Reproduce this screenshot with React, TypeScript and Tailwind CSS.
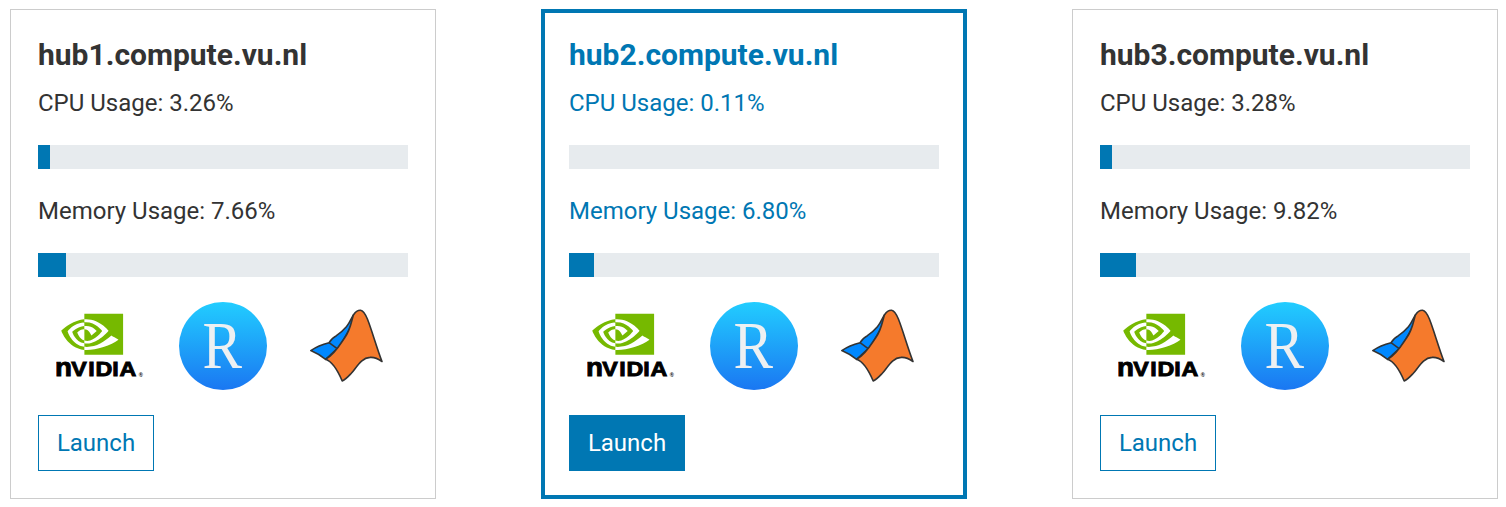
import React from "react";

type Hub = { name: string; cpu: string; memory: string; active?: boolean };

const hubs: Hub[] = [
  { name: "hub1.compute.vu.nl", cpu: "3.26", memory: "7.66" },
  { name: "hub2.compute.vu.nl", cpu: "0.11", memory: "6.80", active: true },
  { name: "hub3.compute.vu.nl", cpu: "3.28", memory: "9.82" },
];

function NvidiaLogo() {
  return (
    <svg viewBox="0 0 88 88" className="size-[88px]" role="img" aria-label="NVIDIA">
      <g transform="translate(5.3 1.4) scale(2.575)">
        <path
          fill="#76b900"
          d="M8.948 8.798v-1.43a6.7 6.7 0 0 1 .424-.018c3.922-.124 6.493 3.374 6.493 3.374s-2.774 3.851-5.75 3.851c-.398 0-.787-.062-1.158-.185v-4.346c1.528.185 1.837.857 2.747 2.385l2.04-1.714s-1.492-1.952-4-1.952a6.016 6.016 0 0 0-.796.035m0-4.735v2.138l.424-.027c5.45-.185 9.01 4.47 9.01 4.47s-4.08 4.964-8.33 4.964c-.37 0-.733-.035-1.095-.097v1.325c.3.035.61.062.91.062 3.957 0 6.82-2.023 9.593-4.408.459.371 2.34 1.263 2.73 1.652-2.633 2.208-8.772 3.984-12.253 3.984-.335 0-.653-.018-.971-.053v1.864H24V4.063zm0 10.326v1.131c-3.657-.654-4.673-4.46-4.673-4.46s1.758-1.944 4.673-2.262v1.237H8.94c-1.528-.186-2.73 1.245-2.73 1.245s.68 2.412 2.739 3.11M2.456 10.9s2.164-3.197 6.5-3.533V6.201C4.153 6.59 0 10.653 0 10.653s2.35 6.802 8.948 7.42v-1.237c-4.84-.6-6.492-5.936-6.492-5.936z"
        />
      </g>
      <g fill="#000" fontFamily="Liberation Sans, sans-serif" fontWeight="700">
        <g stroke="#000" strokeWidth="0.9" textRendering="geometricPrecision">
          <text x="-1" y="74.4" fontSize="26" textLength="17" lengthAdjust="spacingAndGlyphs">n</text>
          <text transform="scale(1.14 1)" x="13.4 28.4 34.7 49.3 55.8" y="74.4" fontSize="20.4">VIDIA</text>
        </g>
        <text x="82.8" y="75.4" fontSize="5.6">®</text>
      </g>
    </svg>
  );
}

function RStudioLogo({ id }: { id: string }) {
  return (
    <svg viewBox="0 0 88 88" className="size-[88px]" role="img" aria-label="RStudio">
      <defs>
        <linearGradient id={id} x1="0" y1="0" x2="0" y2="1">
          <stop offset="0" stopColor="#22cdff" />
          <stop offset="1" stopColor="#1a77f2" />
        </linearGradient>
      </defs>
      <circle cx="44" cy="44" r="44" fill={`url(#${id})`} />
      <text
        x="23.5"
        y="66"
        fill="#edf0f2"
        fontFamily="Liberation Serif, serif"
        fontSize="67"
        textLength="39.5"
        lengthAdjust="spacingAndGlyphs"
      >
        R
      </text>
    </svg>
  );
}

function MatlabLogo() {
  return (
    <svg viewBox="0 0 88 88" className="size-[88px]" role="img" aria-label="MATLAB">
      <g stroke="#333" strokeWidth="1.6" strokeLinejoin="round">
        <path
          fill="#0088ff"
          d="M8.8 48.6C14.5 44.6 20 42.4 27 40.7C29.5 37 31.5 35 34.4 33.7C38.5 31 41.5 28 44.4 24.7C47.5 21.5 49 16.5 51.4 13L50.5 22L38 44L23.6 57.3C19 53.8 14 50.8 8.8 48.6Z"
        />
        <path fill="none" d="M27 40.7L35.2 46.6" />
        <path
          fill="#f57a2c"
          d="M23.6 57.3C31.8 53.2 37.5 43.5 42.7 35.7C48.5 28 49.4 19 51.4 13C53.6 9.6 55.8 8.1 58.6 8.3C61.8 8.8 63.6 12.8 65.4 17C69.8 28 74.6 45.5 80 59.5C75.8 56.5 71.8 55 68 55.4C58.8 55.8 54.4 66 48.9 71.7C46.2 74.6 43.7 77.4 40.2 79C37.2 72 31.5 59.8 23.6 57.3Z"
        />
      </g>
    </svg>
  );
}

function Meter({ label, value }: { label: string; value: string }) {
  const percent = Number(value);
  return (
    <div className="flex flex-col gap-6">
      <p className="text-2xl leading-9">{label}: {value}%</p>
      <div className="h-6 bg-[#e7ebee]">
        {percent >= 0.5 && <div className="h-full bg-[#0077b3]" style={{ width: `${percent}%` }} />}
      </div>
    </div>
  );
}

function HubCard({ hub }: { hub: Hub }) {
  return (
    <section
      className={
        hub.active
          ? "h-[490px] w-[426px] border-4 border-[#0077b3] p-6 text-[#0077b3]"
          : "h-[490px] w-[426px] border border-[#ccc] p-[27px] text-[#333]"
      }
    >
      <h2 className="mb-3 text-[30px] leading-9 font-bold">{hub.name}</h2>
      <div className="flex flex-col gap-6">
        <Meter label="CPU Usage" value={hub.cpu} />
        <Meter label="Memory Usage" value={hub.memory} />
      </div>
      <div className="mt-[25px] mb-[25px] grid grid-cols-3 justify-items-center">
        <NvidiaLogo />
        <RStudioLogo id={`sky-${hub.name}`} />
        <MatlabLogo />
      </div>
      <button
        className={
          hub.active
            ? "h-14 w-[116px] border border-[#0077b3] bg-[#0077b3] text-2xl text-white"
            : "h-14 w-[116px] border border-[#0077b3] bg-white text-2xl text-[#0077b3]"
        }
      >
        Launch
      </button>
    </section>
  );
}

export default function App() {
  return (
    <main className="flex h-[507px] gap-[105px] overflow-hidden bg-white pt-[9px] pl-[10px] font-['Roboto',sans-serif]">
      {hubs.map((hub) => (
        <HubCard key={hub.name} hub={hub} />
      ))}
    </main>
  );
}
